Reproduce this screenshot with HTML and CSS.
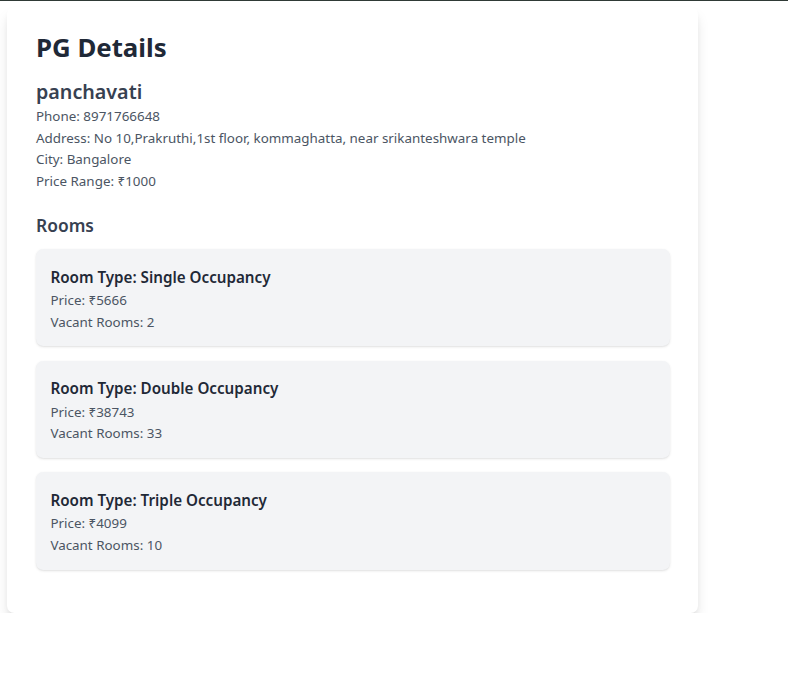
FILE: index.html
```html
<!DOCTYPE html>
<html lang="en">
<head>
<meta charset="utf-8">
<title>PG Details</title>
<link rel="stylesheet" href="styles.css">
</head>
<body>
<div class="topbar"></div>
<div class="card">
  <h1 class="title">PG Details</h1>
  <h2 class="pg-name">panchavati</h2>
  <p class="info">Phone: 8971766648</p>
  <p class="info">Address: No 10,Prakruthi,1st floor, kommaghatta, near srikanteshwara temple</p>
  <p class="info">City: Bangalore</p>
  <p class="info">Price Range: ₹1000</p>
  <h3 class="rooms-title">Rooms</h3>
  <div class="room">
    <h4 class="room-type">Room Type: Single Occupancy</h4>
    <p class="info">Price: ₹5666</p>
    <p class="info">Vacant Rooms: 2</p>
  </div>
  <div class="room">
    <h4 class="room-type">Room Type: Double Occupancy</h4>
    <p class="info">Price: ₹38743</p>
    <p class="info">Vacant Rooms: 33</p>
  </div>
  <div class="room">
    <h4 class="room-type">Room Type: Triple Occupancy</h4>
    <p class="info">Price: ₹4099</p>
    <p class="info">Vacant Rooms: 10</p>
  </div>
</div>
</body>
</html>
```
FILE: styles.css
```css
* { box-sizing: border-box; }
html, body { margin: 0; padding: 0; background: #ffffff; }
body {
  font-family: "Noto Sans", "Open Sans", sans-serif;
  color: #4b5563;
}
.topbar { height: 1px; background: #2f3a36; }
.card {
  margin: 6.2px 0 0 7.2px;
  width: 691.2px;
  padding: 23.9px 28.8px 28.8px;
  background: #ffffff;
  border-radius: 7.2px;
  box-shadow: 0 9px 14px -2.7px rgba(0,0,0,0.13), 0 3.6px 6px -3px rgba(0,0,0,0.1);
}
.title {
  margin: 0 0 15px;
  font-size: 25.8px;
  line-height: 32.4px;
  font-weight: 700;
  color: #1f2937;
}
.pg-name {
  margin: 0;
  font-size: 19.7px;
  line-height: 27.7px;
  font-weight: 600;
  color: #374151;
}
.info {
  margin: 0;
  font-size: 13.4px;
  line-height: 21.6px;
}
.rooms-title {
  margin: 20.75px 0 10.75px;
  font-size: 17.4px;
  line-height: 25.2px;
  font-weight: 600;
  color: #374151;
}
.room {
  margin-bottom: 14.4px;
  padding: 15.6px 14.4px 13.2px;
  background: #f3f4f6;
  border-radius: 7.2px;
  box-shadow: 0 1px 2.7px 0 rgba(0,0,0,0.1), 0 1px 1.8px -1px rgba(0,0,0,0.1);
}
.room-type {
  margin: 0;
  font-size: 15.2px;
  line-height: 25.2px;
  font-weight: 600;
  color: #1f2937;
}
```
